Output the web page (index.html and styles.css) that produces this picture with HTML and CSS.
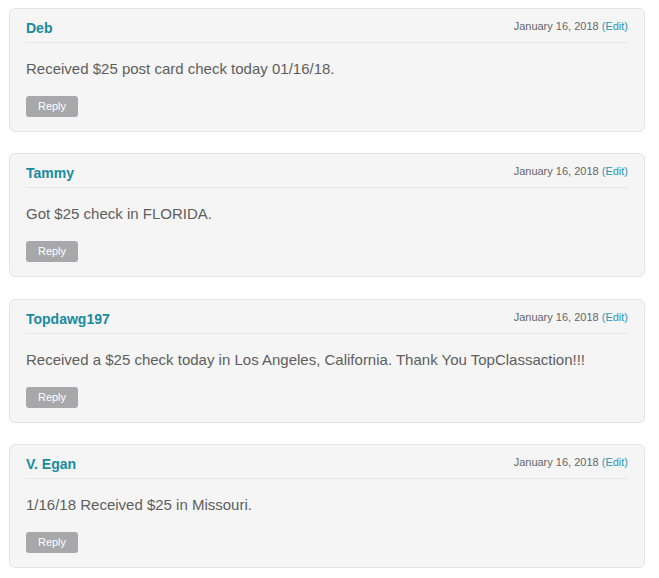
FILE: index.html
```html
<!DOCTYPE html>
<html>
<head>
<meta charset="utf-8">
<link rel="stylesheet" href="styles.css">
</head>
<body>
<div class="list">
  <div class="comment">
    <div class="head"><span class="name">Deb</span><span class="date">January 16, 2018 <a class="edit">(Edit)</a></span></div>
    <p class="text">Received $25 post card check today 01/16/18.</p>
    <span class="reply">Reply</span>
  </div>
  <div class="comment">
    <div class="head"><span class="name">Tammy</span><span class="date">January 16, 2018 <a class="edit">(Edit)</a></span></div>
    <p class="text">Got $25 check in FLORIDA.</p>
    <span class="reply">Reply</span>
  </div>
  <div class="comment">
    <div class="head"><span class="name">Topdawg197</span><span class="date">January 16, 2018 <a class="edit">(Edit)</a></span></div>
    <p class="text">Received a $25 check today in Los Angeles, California. Thank You TopClassaction!!!</p>
    <span class="reply">Reply</span>
  </div>
  <div class="comment">
    <div class="head"><span class="name">V. Egan</span><span class="date">January 16, 2018 <a class="edit">(Edit)</a></span></div>
    <p class="text">1/16/18 Received $25 in Missouri.</p>
    <span class="reply">Reply</span>
  </div>
</div>
</body>
</html>
```
FILE: styles.css
```css
html, body { background: #fff; }
body {
  margin: 0;
  padding: 8px 14px 0 9px;
  font-family: "Liberation Sans", Arial, sans-serif;
}
.list {
  display: flex;
  flex-direction: column;
  gap: 21.4px;
}
.comment {
  background: #f5f5f5;
  border: 1px solid #e4e4e4;
  border-radius: 6px;
  padding: 9px 16px 14px 16px;
  height: 124px;
  box-sizing: border-box;
}
.head {
  display: flex;
  justify-content: space-between;
  align-items: flex-start;
  border-bottom: 1px solid #e6e6e6;
  padding-bottom: 4px;
}
.name {
  font-weight: bold;
  font-size: 14px;
  line-height: 20px;
  color: #178ba2;
}
.date {
  font-size: 11px;
  line-height: 16px;
  color: #666;
}
.edit {
  color: #2b95b5;
}
.text {
  margin: 16px 0 17px;
  font-size: 15px;
  line-height: 20px;
  color: #5e5e5e;
}
.reply {
  display: inline-block;
  background: #a8a8aa;
  color: #fff;
  font-size: 11px;
  line-height: 21px;
  width: 52px;
  text-align: center;
  border-radius: 3px;
}
```
